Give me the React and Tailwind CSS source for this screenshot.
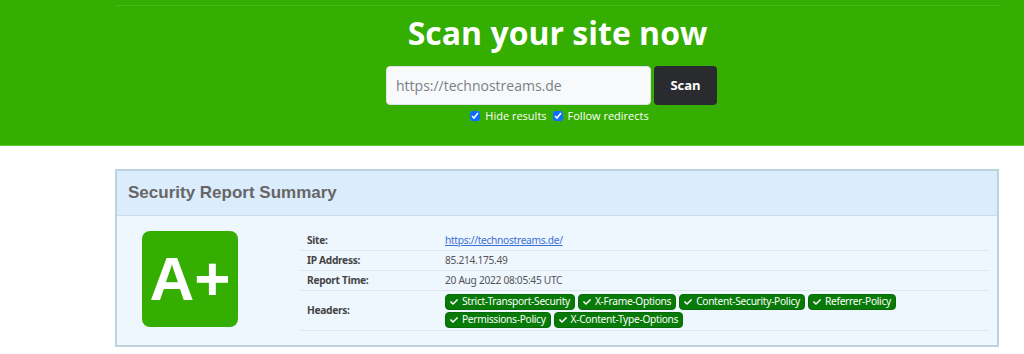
import { FaCheck } from "react-icons/fa";

const HEADERS_OK = [
  "Strict-Transport-Security",
  "X-Frame-Options",
  "Content-Security-Policy",
  "Referrer-Policy",
  "Permissions-Policy",
  "X-Content-Type-Options",
];

function Badge({ label }) {
  return (
    <span className="inline-flex items-center gap-[4px] h-[16px] px-[4px] rounded-[4px] bg-[#087a08] border border-[#0a6a0a] text-white text-[10.2px] tracking-[-0.3px] leading-none whitespace-nowrap">
      <FaCheck className="w-[8px] h-[8px]" />
      {label}
    </span>
  );
}

function Row({ label, children, tall }) {
  return (
    <div className={`flex items-center border-b border-[#dfe6ec] ${tall ? "h-[40px]" : "h-[20px]"}`}>
      <div className="w-[145px] pl-[7px] font-bold text-[#444]">{label}</div>
      <div className="flex-1 text-[#555]">{children}</div>
    </div>
  );
}

export default function App() {
  return (
    <div className="w-[1024px] h-[354px] bg-white overflow-hidden" style={{ fontFamily: "'Open Sans', 'Noto Sans', sans-serif" }}>
      {/* scan banner */}
      <section className="h-[146px] bg-[#34ae00] border-b border-[#5ccc33]">
        <div className="w-[885px] ml-[115px] pt-[5px]">
          <div className="h-px bg-[#46b819]" />
          <h1 className="mt-[8px] text-center text-white font-bold text-[32px] leading-[37px]">
            Scan your site now
          </h1>
          <div className="mt-[15px] flex justify-center gap-[3px] -ml-[12px]">
            <input
              className="w-[265px] h-[39px] rounded-[4px] bg-[#f8f9fa] border border-[#dee2e6] pl-[9px] text-[14px] text-[#212529] placeholder:text-[#7a8087] outline-none"
              placeholder="https://technostreams.de"
              readOnly
            />
            <button className="w-[63px] h-[39px] rounded-[4px] bg-[#292b2f] text-white font-bold text-[13px]">
              Scan
            </button>
          </div>
          <div className="mt-[2px] ml-[4px] flex justify-center items-center gap-[6px] text-white text-[11px] leading-[18px]">
            <label className="flex items-center gap-[5px]">
              <input type="checkbox" defaultChecked className="w-[10px] h-[10px] accent-[#0d6efd]" />
              Hide results
            </label>
            <label className="flex items-center gap-[5px]">
              <input type="checkbox" defaultChecked className="w-[10px] h-[10px] accent-[#0d6efd]" />
              Follow redirects
            </label>
          </div>
        </div>
      </section>

      {/* report summary */}
      <div className="w-[884px] ml-[115px] mt-[23px] border-2 border-[#bcd2dc] bg-[#eef6fe]">
        <div className="h-[45px] flex items-center pl-[11px] bg-[#dbecfc] border-b border-[#c9dcea]">
          <h2 className="text-[17px] font-bold text-[#666]" style={{ fontFamily: "'Liberation Sans', Arial, sans-serif" }}>
            Security Report Summary
          </h2>
        </div>
        <div className="flex pt-[15px] pb-[14px]">
          <div className="w-[183px] pl-[25px]">
            <div
              className="w-[96px] h-[96px] rounded-[8px] bg-[#34ae00] flex items-center justify-center text-white font-bold text-[62px] leading-none"
              style={{ fontFamily: "'Liberation Sans', Arial, sans-serif" }}
            >
              A+
            </div>
          </div>
          <div className="w-[689px] text-[10.2px] tracking-[-0.3px]" style={{ fontFamily: "'Noto Sans', 'Open Sans', sans-serif" }}>
            <Row label="Site:">
              <a href="#" className="text-[#3a6fd6] underline">https://technostreams.de/</a>
            </Row>
            <Row label="IP Address:">85.214.175.49</Row>
            <Row label="Report Time:">20 Aug 2022 08:05:45 UTC</Row>
            <Row label="Headers:" tall>
              <div className="flex flex-wrap gap-x-[3px] gap-y-[2px] w-[470px]">
                {HEADERS_OK.map((h) => (
                  <Badge key={h} label={h} />
                ))}
              </div>
            </Row>
          </div>
        </div>
      </div>
    </div>
  );
}
